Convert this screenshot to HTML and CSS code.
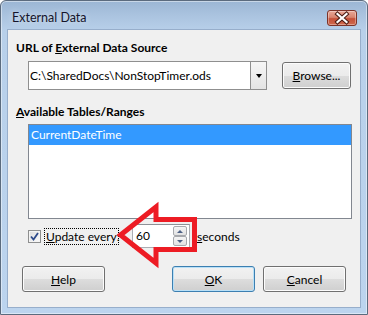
FILE: index.html
```html
<!DOCTYPE html>
<html>
<head>
<meta charset="utf-8">
<link rel="stylesheet" href="styles.css">
</head>
<body>
<div class="window">
  <div class="titlebar">
    <span class="title">External Data</span>
    <span class="close">
      <svg width="30" height="16" viewBox="0 0 30 16">
        <path d="M10.5 4 L19.5 12 M19.5 4 L10.5 12" stroke="#4a1c14" stroke-width="4.2" stroke-linecap="square"/>
        <path d="M10.5 4 L19.5 12 M19.5 4 L10.5 12" stroke="#ffffff" stroke-width="2.2" stroke-linecap="square"/>
      </svg>
    </span>
  </div>
  <div class="client">
    <div class="heading">URL of <u>E</u>xternal Data Source</div>
    <div class="row-url">
      <div class="combo">
        <div class="combo-text">C:\SharedDocs\NonStopTimer.ods</div>
        <div class="combo-btn"><span class="tri-down"></span></div>
      </div>
      <div class="btn browse"><span><u>B</u>rowse...</span></div>
    </div>
    <div class="heading heading2"><u>A</u>vailable Tables/Ranges</div>
    <div class="listbox">
      <div class="item selected">CurrentDateTime</div>
    </div>
    <div class="row-update">
      <span class="checkbox">
        <svg width="9" height="9" viewBox="0 0 9 9">
          <path d="M1 4.5 L3.5 7.5 L8 1" stroke="#2d4a8a" stroke-width="1.8" fill="none"/>
        </svg>
      </span>
      <span class="focus"><u>U</u>pdate every:</span>
      <div class="spin">
        <span class="spin-text">60</span>
        <div class="spin-btns">
          <span class="spin-btn"><span class="tri-up-s"></span></span>
          <span class="spin-btn"><span class="tri-down-s"></span></span>
        </div>
      </div>
      <span class="secs"><u>s</u>econds</span>
    </div>
    <div class="row-buttons">
      <div class="btn help"><span><u>H</u>elp</span></div>
      <div class="spacer"></div>
      <div class="btn ok"><span><u>O</u>K</span></div>
      <div class="btn cancel"><span><u>C</u>ancel</span></div>
    </div>
  </div>
  <svg class="arrow" width="368" height="315" viewBox="0 0 368 315">
    <polygon points="120.5,235 156,207 156,219.5 194.5,219.5 194.5,249.5 156,249.5 156,263" fill="none" stroke="#ed1c24" stroke-width="5" stroke-linejoin="miter"/>
  </svg>
</div>
</body>
</html>
```

FILE: styles.css
```css
* { box-sizing: border-box; }
html, body { margin: 0; padding: 0; background: #ffffff; }
body {
  font-family: "Lato", "Noto Sans", sans-serif;
  font-size: 12px;
  color: #000;
  width: 368px;
  height: 315px;
  overflow: hidden;
}
.window {
  position: relative;
  width: 368px;
  height: 315px;
  border: 1px solid #5b6b7e;
  border-radius: 6px 6px 0 0;
  background: linear-gradient(#9bb6d4 0px, #aac3df 14px, #b8d0ea 30px, #bcd4ee 100%);
  box-shadow: inset 0 0 0 1px rgba(255,255,255,0.45);
  padding: 0 6px 6px 6px;
  display: flex;
  flex-direction: column;
}
.titlebar {
  height: 28px;
  display: flex;
  align-items: flex-start;
  padding-top: 9px;
  padding-left: 5px;
  padding-right: 4px;
}
.title {
  flex: 1;
  line-height: 16px;
  font-size: 12.5px;
  color: #15152b;
  text-shadow: 0 0 6px rgba(255,255,255,0.7);
}
.close {
  width: 30px;
  height: 16px;
  border: 1px solid #7d3328;
  border-radius: 3px;
  background: linear-gradient(#e8a898 0%, #d98570 45%, #c55038 55%, #cf6a4e 100%);
  box-shadow: inset 0 0 0 1px rgba(255,255,255,0.35);
  display: flex;
  align-items: center;
  justify-content: center;
  overflow: hidden;
}
.close svg { display: block; margin: -1px; }
.client {
  flex: 1;
  background: #f0f0f0;
  border: 1px solid #97aecb;
  padding: 10px 8px 0 8px;
  display: flex;
  flex-direction: column;
}
.heading {
  font-weight: bold;
  line-height: 16px;
  height: 16px;
}
.heading2 { margin-top: 14px; }
.row-url {
  margin-top: 5px;
  margin-left: 12px;
  display: flex;
  align-items: center;
  height: 29px;
}
.combo {
  width: 239px;
  height: 29px;
  border: 1px solid #8f8f8f;
  background: #fff;
  display: flex;
}
.combo-text {
  flex: 1;
  line-height: 27px;
  padding-left: 1px;
}
.combo-btn {
  width: 17px;
  margin: 0 -1px -1px 0;
  height: 29px;
  margin-top: -1px;
  border: 1px solid #8f8f8f;
  background: linear-gradient(#f6f6f6, #e4e4e4);
  display: flex;
  align-items: center;
  justify-content: center;
}
.tri-down {
  width: 0; height: 0;
  border-left: 3.5px solid transparent;
  border-right: 3.5px solid transparent;
  border-top: 4px solid #000;
}
.btn {
  border: 1px solid #707070;
  border-radius: 3px;
  background: linear-gradient(#f2f2f2 0%, #ebebeb 50%, #dddddd 50%, #cfcfcf 100%);
  box-shadow: inset 0 0 0 1px #fcfcfc;
  display: flex;
  align-items: center;
  justify-content: center;
}
.browse {
  margin-left: 15px;
  width: 69px;
  height: 27px;
}
.listbox {
  margin-top: 4px;
  margin-left: 12px;
  width: 324px;
  height: 95px;
  border: 1px solid #828790;
  background: #fff;
}
.item {
  height: 20px;
  line-height: 20px;
  padding-left: 2px;
}
.selected {
  background: #3399ff;
  color: #fff;
}
.row-update {
  margin-top: 5px;
  height: 24px;
  display: flex;
  align-items: center;
  margin-left: 12px;
}
.checkbox {
  flex-shrink: 0;
  width: 13px;
  height: 13px;
  border: 1px solid #8e8f8f;
  background: linear-gradient(135deg, #dcdcdc, #fbfbfb);
  box-shadow: inset 0 0 0 1px #f4f4f4;
  display: flex;
  align-items: center;
  justify-content: center;
}
.checkbox svg { display: block; }
.focus {
  flex-shrink: 0;
  margin-left: 3px;
  width: 75px;
  height: 17px;
  line-height: 15px;
  border: 1px dotted #000;
  padding-left: 1px;
  white-space: nowrap;
}
.spin {
  flex-shrink: 0;
  margin-left: 13px;
  width: 58px;
  height: 24px;
  border: 1px solid #abadb3;
  border-top-color: #8e9196;
  background: #fff;
  display: flex;
  align-items: center;
  padding-left: 3px;
  padding-right: 2px;
}
.spin-text { flex: 1; line-height: 22px; }
.spin-btns {
  display: flex;
  flex-direction: column;
  width: 14px;
}
.spin-btn {
  height: 10px;
  border: 1px solid #a7a9ad;
  border-radius: 2px;
  background: linear-gradient(#f5f5f5, #e2e2e2);
  display: flex;
  align-items: center;
  justify-content: center;
}
.tri-up-s {
  width: 0; height: 0;
  border-left: 3px solid transparent;
  border-right: 3px solid transparent;
  border-bottom: 3px solid #4d6185;
}
.tri-down-s {
  width: 0; height: 0;
  border-left: 3px solid transparent;
  border-right: 3px solid transparent;
  border-top: 3px solid #4d6185;
}
.secs { margin-left: 7px; white-space: nowrap; }
.row-buttons {
  margin-top: 18px;
  height: 26px;
  display: flex;
  padding-left: 6px;
  padding-right: 6px;
}
.row-buttons .btn { width: 83px; height: 26px; }
.spacer { flex: 1; }
.cancel { margin-left: 8px; }
.ok {
  border-color: #3c7fb1;
  box-shadow: inset 0 0 0 1px #b9e0f7;
}
.arrow {
  position: absolute;
  left: -1px;
  top: -1px;
  pointer-events: none;
}
```
